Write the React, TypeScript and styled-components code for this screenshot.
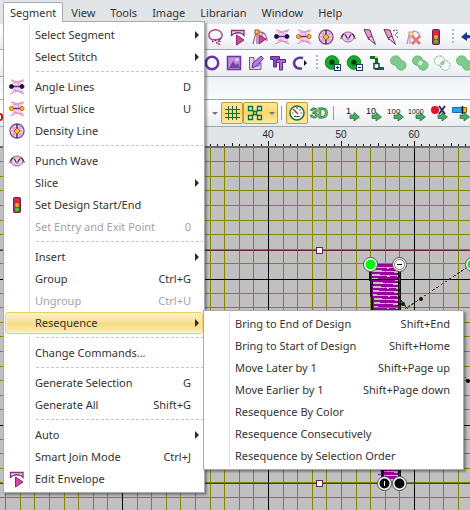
import React from "react";
import styled, { createGlobalStyle } from "styled-components";

const GlobalStyle = createGlobalStyle`
  * { box-sizing: border-box; }
  body { margin: 0; background: #c0c0c0; }
  body, button { font-family: "Noto Sans", "Open Sans", sans-serif; font-size: 11px; color: #333; }
  button { border: 0; padding: 0; margin: 0; background: none; text-align: left; }
  svg { display: block; }
`;

const Page = styled.div`
  min-height: 100vh;
  display: flex;
  flex-direction: column;
  overflow: hidden;
`;

const MenuBar = styled.nav`
  display: flex;
  gap: 1px;
  height: 24px;
  padding: 2px 0 0 3px;
  background: #e1e5e8;
`;

const MenuHost = styled.div`
  position: relative;
`;

const MenuTitle = styled.button<{ $open?: boolean }>`
  position: relative;
  z-index: ${(p) => (p.$open ? 3 : 0)};
  height: 20px;
  padding: 0 6px;
  white-space: nowrap;
  border: 1px solid ${(p) => (p.$open ? "#a7abb0" : "transparent")};
  border-bottom: 0;
  border-radius: 2px 2px 0 0;
  background: ${(p) => (p.$open ? "#fff" : "transparent")};
`;

const MenuPanel = styled.div<{ $sub?: boolean }>`
  position: absolute;
  z-index: ${(p) => (p.$sub ? 4 : 2)};
  top: ${(p) => (p.$sub ? "-2px" : "19px")};
  left: ${(p) => (p.$sub ? "198px" : "0")};
  width: ${(p) => (p.$sub ? "261px" : "202px")};
  padding: 2px 1px;
  border: 1px solid #a7abb0;
  background: linear-gradient(#e2e3e3, #e2e3e3) 25px 2px / 1px calc(100% - 4px) no-repeat #fff;
  box-shadow: 2px 2px 2px rgba(0, 0, 0, 0.35);
`;

const ItemHost = styled.div`
  position: relative;
`;

const ItemButton = styled.button<{ $active?: boolean }>`
  display: grid;
  grid-template-columns: 29px 1fr auto 11px;
  align-items: center;
  width: 100%;
  height: 22px;
  line-height: 20px;
  white-space: nowrap;
  border: 1px solid ${(p) => (p.$active ? "#ebc965" : "transparent")};
  border-radius: 3px;
  background: ${(p) =>
    p.$active ? "linear-gradient(#fbf0c6, #f9e6a2 35%, #f7dc83 55%, #fbeebb)" : "transparent"};
  box-shadow: ${(p) => (p.$active ? "inset 0 0 0 1px #fdf3d3" : "none")};
  &:disabled { color: #a3a3a3; }
`;

const ItemIcon = styled.span`
  padding-left: 3px;
`;

const Arrow = styled.span`
  justify-self: start;
  margin-left: 4px;
  border: 4px solid transparent;
  border-left-color: #2b2b2b;
  border-right: 0;
`;

const Divider = styled.hr`
  height: 1px;
  margin: 3px 0 4px 31px;
  border: 0;
  background: repeating-linear-gradient(90deg, #c8c8c8 0 3px, transparent 3px 5px);
`;

const Toolbar = styled.div<{ $start: number }>`
  display: flex;
  align-items: center;
  height: 26px;
  padding-left: ${(p) => p.$start}px;
  border-bottom: 1px solid #a2a5a9;
  background: linear-gradient(#fdfdfe, #f7f8fa 50%, #e9ecf0);
  overflow: hidden;
`;

const TallToolbar = styled(Toolbar)`
  height: 27px;
`;

const EmptyBar = styled(Toolbar)`
  height: 23px;
  background: linear-gradient(#f0f1f4, #fbfbfc);
`;

const ToolButton = styled.button<{ $on?: boolean; $wide?: boolean }>`
  display: flex;
  flex: none;
  align-items: center;
  justify-content: ${(p) => (p.$wide ? "space-between" : "center")};
  width: ${(p) => (p.$wide ? 35 : 22)}px;
  height: 22px;
  padding: ${(p) => (p.$wide ? "0 2px 0 3px" : "0")};
  border: 1px solid ${(p) => (p.$on ? "#c39a3d" : "transparent")};
  border-radius: 2px;
  background: ${(p) => (p.$on ? "linear-gradient(#fde6a0, #fbd768 50%, #fdeaa0)" : "none")};
`;

const Caret = styled.span`
  border: 3px solid transparent;
  border-top-color: #777;
  border-bottom: 0;
`;

const CaretButton = styled(ToolButton)`
  width: 16px;
  padding-left: 3px;
`;

const EdgeMark = styled.span`
  flex: none;
  width: 3px;
  height: 8px;
  margin: 7px 202px 0 0;
  border: 2px solid #cf1620;
  border-left: 0;
  border-radius: 0 4px 4px 0;
`;

const Rule = styled.span`
  flex: none;
  width: 1px;
  height: 14px;
  margin: 0 4px 0 3px;
  background: #9a9da2;
`;

const WideRule = styled(Rule)`
  margin-right: 7px;
`;

const Grip = styled.span`
  flex: none;
  width: 2px;
  height: 16px;
  margin: 0 4px 0 5px;
  background: repeating-linear-gradient(#b4bac3 0 2px, transparent 2px 4px);
`;

const Ruler = styled.svg`
  width: 100%;
  height: 21px;
  background: #e1e5e8;
`;

const Canvas = styled.svg`
  flex: 1 0 362px;
  width: 100%;
  background: #c0c0c0;
`;

const slicePaths = (dot: string, rim: string) => (
  <>
    <path d="M2 0L8 2L15 0L12 7L15 15L8 12L2 15L5 8Z" fill="#f6cfe8" />
    <path d="M2 1L8 3L15 1M4 4L14 2M4 11L14 13M1 15L8 12L15 15M9 3L10 6M6 10L8 13" fill="none" stroke="#dc95c5" />
    <path d="M3 7.500H13" stroke="#6a2aa0" strokeWidth="1.500" />
    <circle cx="2.500" cy="7.500" r="2" fill={dot} stroke={rim} />
    <circle cx="13" cy="7.500" r="2" fill={dot} stroke={rim} />
  </>
);

const club = (a: string, overlap: string, dashed = false) => (
  <>
    <path
      d="M5 1a4.500 4.500 0 0 1 4.600 4.600a4.800 4.800 0 1 1-4.200 4.600A4.700 4.700 0 1 1 5 1Z"
      fill={a}
      stroke={dashed ? "#62a878" : "#68b77c"}
      strokeDasharray={dashed ? "2 1" : undefined}
    />
    <ellipse cx="7.500" cy="8" rx="2.600" ry="2" transform="rotate(-45 7.500 8)" fill={overlap} />
  </>
);

const goArrow = <path d="M6 10h4V7.500l5.500 4.500L10 16v-2.500H6Z" fill="#4caa63" stroke="#25613a" strokeWidth=".7" />;

const counter = (text: string, size: number, x: number) => (
  <>
    <text x={x} y="9" fontFamily="Liberation Sans" fontSize={size} fill="#111">{text}</text>
    {goArrow}
  </>
);

const hole = (
  <>
    <circle cx="7" cy="7.500" r="5" fill="#0a6d1d" stroke="#15ac30" strokeWidth="4" />
    <circle cx="7" cy="7.500" r="6.800" fill="none" stroke="#0b7d20" strokeWidth=".8" />
    <circle cx="7" cy="7" r="2.200" fill="#06380f" />
    <rect x="9.500" y="9.500" width="6" height="6" fill="#fff" stroke="#173a65" />
  </>
);

const icons: Record<string, React.ReactNode> = {
  lasso: (
    <>
      <path d="M5 11C-1 9 0 2 6 1C12 0 16 5 13 9C11 12 6 10 5 11" fill="none" stroke="#b04a8c" strokeWidth="1.500" />
      <path d="M4 13L7 11L9 14L11 12L11 16M12 9v4" fill="none" stroke="#9b3478" strokeWidth="1.500" strokeDasharray="2 1" />
    </>
  ),
  envelope: (
    <>
      <path d="M1.500 1.500H14V6.500L12 4.500Q8 3 4 4.500L1.500 6.500Z" fill="#f6d5ee" stroke="#813577" strokeWidth="1.300" />
      <path d="M6.500 6L14 11L6.500 16Z" fill="#d6469d" stroke="#842969" />
    </>
  ),
  reshape: (
    <>
      <path d="M1 15C3 8 3 3 8 3C13 3 15 8 15 12M5 3v12M10 4v5" fill="none" stroke="#aa6598" strokeWidth="1.300" />
      <path d="M7 6L14 10L7 15Z" fill="#d43e95" stroke="#842969" />
      <rect x="3" y="1" width="4" height="4" fill="#ffc43b" stroke="#ad4c22" />
    </>
  ),
  angle: slicePaths("#15142c", "#1a1c4d"),
  virtual: slicePaths("#ffcc10", "#b45d00"),
  density: (
    <>
      <circle cx="8" cy="8" r="7" fill="#f3d6ec" stroke="#854782" strokeWidth="1.400" />
      <path d="M2 5H14M1 8H15M2 11H14M5 2V14M11 2V14" stroke="#c79cc2" />
      <path d="M8 1V15" stroke="#263177" strokeWidth="1.500" />
      <path d="M8 5L11 8L8 11L5 8Z" fill="#ffc81c" stroke="#bd4c32" />
    </>
  ),
  wave: (
    <>
      <ellipse cx="8" cy="8" rx="6" ry="5" fill="#efd3f6" stroke="#9a5aa8" />
      <path d="M3 5H13M3 11H13" stroke="#d6b2dc" />
      <path d="M1 10C2 5 3.500 5 4.500 5S7 10 8 10S10.500 5 11.500 5S14 5 15 10" fill="none" stroke="#3a2a86" strokeWidth="1.300" />
      <path d="M0 9h2M4 5h2M7 10h2M10 5h2M14 9h2" stroke="#e39b3e" strokeWidth="1.500" />
    </>
  ),
  knife: (
    <>
      <path d="M2 .5L8 1L10 7L7 11L4 5Z" fill="#e0a0cc" stroke="#713160" />
      <path d="M6 9L10 7L13.500 15.500Z" fill="#f3c9e4" stroke="#713160" />
    </>
  ),
  knifeCurve: (
    <>
      <path d="M0 .5L6 1L8 7L5 11L2 5Z" fill="#e0a0cc" stroke="#713160" />
      <path d="M4 9L8 7L11.500 15.500Z" fill="#f3c9e4" stroke="#713160" />
      <path d="M9 2C13-1 15 3 12 5S14 6 14 10" fill="none" stroke="#4b2746" strokeDasharray="2 1" />
    </>
  ),
  removePoint: (
    <g opacity=".65">
      <path d="M1 15L3 6L8 2C13 3 14 5 14 8M4 6V15" fill="none" stroke="#a46a9a" strokeWidth="1.300" />
      <rect x="3" y="3" width="4" height="4" fill="#ffd05d" stroke="#b56936" />
      <path d="M6 7L14 15M14 7L6 15" stroke="#db3833" strokeWidth="3" />
    </g>
  ),
  traffic: (
    <>
      <rect x="4.500" y=".5" width="7" height="15" rx="1" fill="#a53468" stroke="#702145" />
      <circle cx="8" cy="3.500" r="2" fill="#ff2410" />
      <circle cx="8" cy="8" r="2" fill="#ffa720" />
      <circle cx="8" cy="12.500" r="2" fill="#36d52c" />
    </>
  ),
  undo: <path d="M0 8L6 3V6C10 6 13 7 14 10C11 9 9 9 6 9.500V12Z" fill="#173a91" />,
  ring: <circle cx="8" cy="8" r="6.200" fill="none" stroke="#6b35a5" strokeWidth="2.500" />,
  picture: (
    <>
      <rect x="1.500" y="1.500" width="13" height="13" fill="#bf91de" stroke="#6d37a3" strokeWidth="1.500" />
      <path d="M3 13L7 6L10 10L12 8L14 13Z" fill="#7542a7" /><circle cx="11" cy="4.500" r="1.500" fill="#eadbf8" />
    </>
  ),
  pencil: (
    <>
      <path d="M1.500 2.500H6V11H11V8H13V14.500H1.500Z" fill="#e2d0f2" stroke="#76519b" />
      <path d="M4 13L5 8L13 1L15.500 3.500L8.500 11Z" fill="#b27fdd" stroke="#5e3290" />
    </>
  ),
  letters: (
    <>
      <path d="M.5 1.500H9.500V4.500H6.500V12H3.500V4.500H.5Z" fill="#8d4bc0" stroke="#5b2b8d" />
      <path d="M6.500 4.500H15.500V7.500H12.500V15H9.500V7.500H6.500Z" fill="#a86ad2" stroke="#5b2b8d" />
    </>
  ),
  arc: (
    <>
      <path d="M11 3C1 1-1 12 7 13.500H10" fill="none" stroke="#65369b" strokeWidth="2.700" />
      <path d="M12 5L15 8L12 11Z" fill="#111" />
    </>
  ),
  holeAdd: <>{hole}<path d="M11 12.500H14M12.500 11V14" stroke="#173a65" /></>,
  holeRemove: <>{hole}<path d="M11 12.500H14" stroke="#173a65" /></>,
  step: (
    <>
      <path d="M1 2.500H7.500V13.500H15" fill="none" stroke="#08712b" strokeWidth="3" />
      <rect x="5" y="8.500" width="5" height="5" fill="#fff" stroke="#124b35" strokeWidth="1.500" />
      <path d="M6 2h3" stroke="#f5ce35" strokeWidth="2" />
    </>
  ),
  union: club("#80ca8e", "#80ca8e"),
  overlap: club("#80ca8e", "#d5eddb"),
  outline: club("#fff", "#91cc9d", true),
  grid: <path d="M4.500 1V15M8.500 1V15M12.500 1V15M1 4.500H16M1 8.500H16M1 12.500H16" stroke="#146c3c" />,
  snap: (
    <>
      <path d="M4 4L12 12M12 4L4 12" stroke="#146c3c" strokeWidth="1.300" />
      <path d="M1.500 1.500h4v4h-4zM10.500 1.500h4v4h-4zM1.500 10.500h4v4h-4zM10.500 10.500h4v4h-4zM6.500 6.500h3v3h-3z" fill="#d7f0c9" stroke="#146c3c" strokeWidth="1.300" />
    </>
  ),
  gauge: (
    <>
      <circle cx="8" cy="8" r="7" fill="#fff" stroke="#1d7146" strokeWidth="1.500" />
      <path d="M8 2v2M3 8h1.500M11.500 8H13M11.500 4.500L10.500 5.500M5 11.500H11" stroke="#286e4b" strokeWidth="1.200" />
      <path d="M4 4L9 9" stroke="#d72a28" strokeWidth="1.500" />
    </>
  ),
  threeD: (
    <text x="-1" y="13" fontFamily="Liberation Sans" fontWeight="700" fontSize="14" fill="#6bd08a" stroke="#27804a" strokeWidth=".8">3D</text>
  ),
  one: counter("1", 9, 2),
  ten: counter("10", 9, 0),
  hundred: counter("100", 8, -1),
  thousand: counter("1000", 7, -2),
  colorStep: (
    <>
      <circle cx="3" cy="5" r="4" fill="#e11425" />
      <path d="M7 1L13 9M13 1L7 9" stroke="#292d62" strokeWidth="2" />{goArrow}
    </>
  ),
  segmentStep: (
    <>
      <path d="M-1.500 2.500H8V7.500H-1.500Z" fill="#22a7ed" stroke="#1c69b2" />
      <path d="M8 2.500H12.500V7.500H8Z" fill="#fbb42c" stroke="#9b5a11" /><path d="M8.500 1V9" stroke="#111" strokeWidth="1.500" />{goArrow}
    </>
  ),
};

const Icon = ({ name }: { name: string }) => (
  <svg width="16" height="16" viewBox="0 0 16 16" overflow="visible" aria-hidden="true">
    {icons[name]}
  </svg>
);

const Tools = ({ names }: { names: string[] }) => (
  <>
    {names.map((n, i) => (
      <ToolButton key={n + i} aria-label={n}><Icon name={n} /></ToolButton>
    ))}
  </>
);

type Entry = { label: string; keys?: string; icon?: string; more?: boolean; off?: boolean; children?: Entry[] } | null;

const resequence: Entry[] = [
  { label: "Bring to End of Design", keys: "Shift+End" },
  { label: "Bring to Start of Design", keys: "Shift+Home" },
  { label: "Move Later by 1", keys: "Shift+Page up" },
  { label: "Move Earlier by 1", keys: "Shift+Page down" },
  { label: "Resequence By Color" },
  { label: "Resequence Consecutively" },
  { label: "Resequence by Selection Order" },
];

const segment: Entry[] = [
  { label: "Select Segment", more: true },
  { label: "Select Stitch", more: true },
  null,
  { label: "Angle Lines", keys: "D", icon: "angle" },
  { label: "Virtual Slice", keys: "U", icon: "virtual" },
  { label: "Density Line", icon: "density" },
  null,
  { label: "Punch Wave", icon: "wave" },
  { label: "Slice", more: true },
  { label: "Set Design Start/End", icon: "traffic" },
  { label: "Set Entry and Exit Point", keys: "0", off: true },
  null,
  { label: "Insert", more: true },
  { label: "Group", keys: "Ctrl+G" },
  { label: "Ungroup", keys: "Ctrl+U", off: true },
  { label: "Resequence", more: true, children: resequence },
  null,
  { label: "Change Commands..." },
  null,
  { label: "Generate Selection", keys: "G" },
  { label: "Generate All", keys: "Shift+G" },
  null,
  { label: "Auto", more: true },
  { label: "Smart Join Mode", keys: "Ctrl+J" },
  { label: "Edit Envelope", icon: "envelope" },
];

const Menu = ({ entries, sub }: { entries: Entry[]; sub?: boolean }) => (
  <MenuPanel role="menu" $sub={sub}>
    {entries.map((e, i) =>
      e === null ? (
        <Divider key={i} />
      ) : (
        <ItemHost key={i}>
          <ItemButton role="menuitem" disabled={e.off} $active={!!e.children} aria-haspopup={e.more ? "menu" : undefined}>
            <ItemIcon>{e.icon && <Icon name={e.icon} />}</ItemIcon>
            <span>{e.label}</span>
            <span>{e.keys}</span>
            {e.more ? <Arrow /> : <span />}
          </ItemButton>
          {e.children && <Menu entries={e.children} sub />}
        </ItemHost>
      )
    )}
  </MenuPanel>
);

const gridSteps = [15, 29, 44, 58, 73, 88, 102, 117, 131];
const tickSteps = [7, 15, 22, 29, 44, 51, 58, 66];
const rulerLabels = [40, 50, 60];
const stitchRows = Array.from({ length: 54 }, (_, i) => i);

const Node = ({ x, y, kind }: { x: number; y: number; kind: "start" | "end" | "enter" | "exit" }) => {
  const dark = kind === "enter" || kind === "exit";
  return (
    <g>
      <circle cx={x + 0.5} cy={y + 0.5} r="7" fill="#fff" stroke="#4a4a4a" strokeWidth="1" />
      <circle cx={x + 0.5} cy={y + 0.5} r="5" fill={kind === "start" ? "#00f800" : dark ? "#000" : "#fff"} stroke={kind === "end" ? "#777" : "none"} />
      {kind === "end" && <path d={`M${x - 2} ${y + 0.5}h5`} stroke="#000" />}
      {kind === "enter" && <path d={`M${x + 0.5} ${y - 2}v5`} stroke="#fff" />}
    </g>
  );
};

const DesignCanvas = () => (
  <Canvas aria-label="Design canvas">
    <defs>
      <pattern id="grid" x="122" y="131" width="146" height="146" patternUnits="userSpaceOnUse">
        <g shapeRendering="crispEdges">
          {gridSteps.map((s) => (
            <React.Fragment key={s}>
              <rect x={s} y="0" width="1" height="146" fill="#858500" />
              <rect x="0" y={s - 1} width="146" height="1" fill="#858500" />
            </React.Fragment>
          ))}
          <path d="M0 0h146v1H1v145H0Z" fill="#000" />
        </g>
      </pattern>
    </defs>
    <rect width="100%" height="100%" fill="url(#grid)" />
    <g shapeRendering="crispEdges">
      <rect y="102" width="100%" height="1" fill="#64293d" />
      <rect y="335" width="100%" height="1" fill="#64293d" />
      <path d="M316.500 99.500h6v6h-6zM316.500 332.500h6v6h-6z" fill="#fff" stroke="#64293d" />
      {stitchRows.map((i) => (
        <React.Fragment key={i}>
          <rect x={371 + Math.floor(i / 4)} y={116 + i * 4} width={16 - Math.floor(i / 5)} height="2" fill="#990099" />
          <rect x={377 + ((i * 5) % 7)} y={118 + i * 4} width="9" height="1" fill="#990099" />
          <rect x={384} y={117 + i * 4} width="15" height="2" fill="#990099" />
          <rect x={386 + ((i * 3) % 5)} y={116 + i * 4} width="7" height="1" fill="#990099" />
        </React.Fragment>
      ))}
      <path d="M370 117L373 165L383 330" fill="none" stroke="#111" strokeWidth="3" />
      <path d="M371 122L374 165" stroke="#990099" />
      <path d="M399.500 117V330" stroke="#111" strokeWidth="3" />
      <path d="M399.500 122V330" stroke="#990099" strokeDasharray="5 2" />
      <path d="M472 116L405 161" fill="none" stroke="#64293d" strokeDasharray="3 2" />
      <path d="M399 150L408 161M463 226L469 234" stroke="#990099" strokeDasharray="2 1" />
    </g>
    <circle cx="421" cy="151" r="2" fill="#1a1014" />
    <circle cx="403" cy="156" r="2" fill="#1a1014" />
    <circle cx="468" cy="233" r="2" fill="#000" />
    <Node x={370} y={116} kind="start" />
    <Node x={399} y={116} kind="end" />
    <Node x={472} y={116} kind="start" />
    <Node x={384} y={335} kind="enter" />
    <Node x={399} y={335} kind="exit" />
  </Canvas>
);

const RulerBar = () => (
  <Ruler aria-label="Ruler">
    <defs>
      <pattern id="ticks" x="268" width="73" height="21" patternUnits="userSpaceOnUse">
        <g shapeRendering="crispEdges" fill="#111">
          <rect width="1" height="5" y="14" />
          <rect x="37" width="1" height="3" y="16" />
          {tickSteps.map((t) => <rect key={t} x={t} y="17" width="1" height="2" />)}
        </g>
      </pattern>
    </defs>
    <rect width="100%" height="21" fill="url(#ticks)" />
    {rulerLabels.map((n) => (
      <text key={n} x={n * 7.3 - 24} y="11" textAnchor="middle" fontFamily="Liberation Sans" fontSize="10" fill="#26282b">{n}</text>
    ))}
    <rect y="19" width="100%" height="2" fill="#6b6b6b" />
  </Ruler>
);

export default function App() {
  return (
    <Page>
      <GlobalStyle />
      <MenuBar aria-label="Main menu">
        <MenuHost>
          <MenuTitle $open aria-expanded="true">Segment</MenuTitle>
          <Menu entries={segment} />
        </MenuHost>
        {["View", "Tools", "Image", "Librarian", "Window", "Help"].map((t) => (
          <MenuTitle key={t}>{t}</MenuTitle>
        ))}
      </MenuBar>
      <Toolbar $start={205}>
        <Tools names={["lasso", "envelope", "reshape", "angle", "virtual", "density", "wave", "knife", "knifeCurve", "removePoint", "traffic"]} />
        <Grip />
        <Tools names={["undo"]} />
      </Toolbar>
      <TallToolbar $start={201}>
        <Tools names={["ring", "picture", "pencil", "letters", "arc"]} />
        <Grip />
        <Tools names={["holeAdd", "holeRemove", "step", "union", "overlap", "outline", "union"]} />
      </TallToolbar>
      <EmptyBar $start={0} />
      <TallToolbar $start={0}>
        <EdgeMark />
        <CaretButton aria-label="View options"><Caret /></CaretButton>
        <ToolButton $on aria-label="Grid"><Icon name="grid" /></ToolButton>
        <ToolButton $on $wide aria-label="Snap"><Icon name="snap" /><Caret /></ToolButton>
        <Rule />
        <ToolButton $on aria-label="Density view"><Icon name="gauge" /></ToolButton>
        <Tools names={["threeD"]} />
        <WideRule />
        <Tools names={["one", "ten", "hundred", "thousand", "colorStep", "segmentStep"]} />
      </TallToolbar>
      <RulerBar />
      <DesignCanvas />
    </Page>
  );
}
